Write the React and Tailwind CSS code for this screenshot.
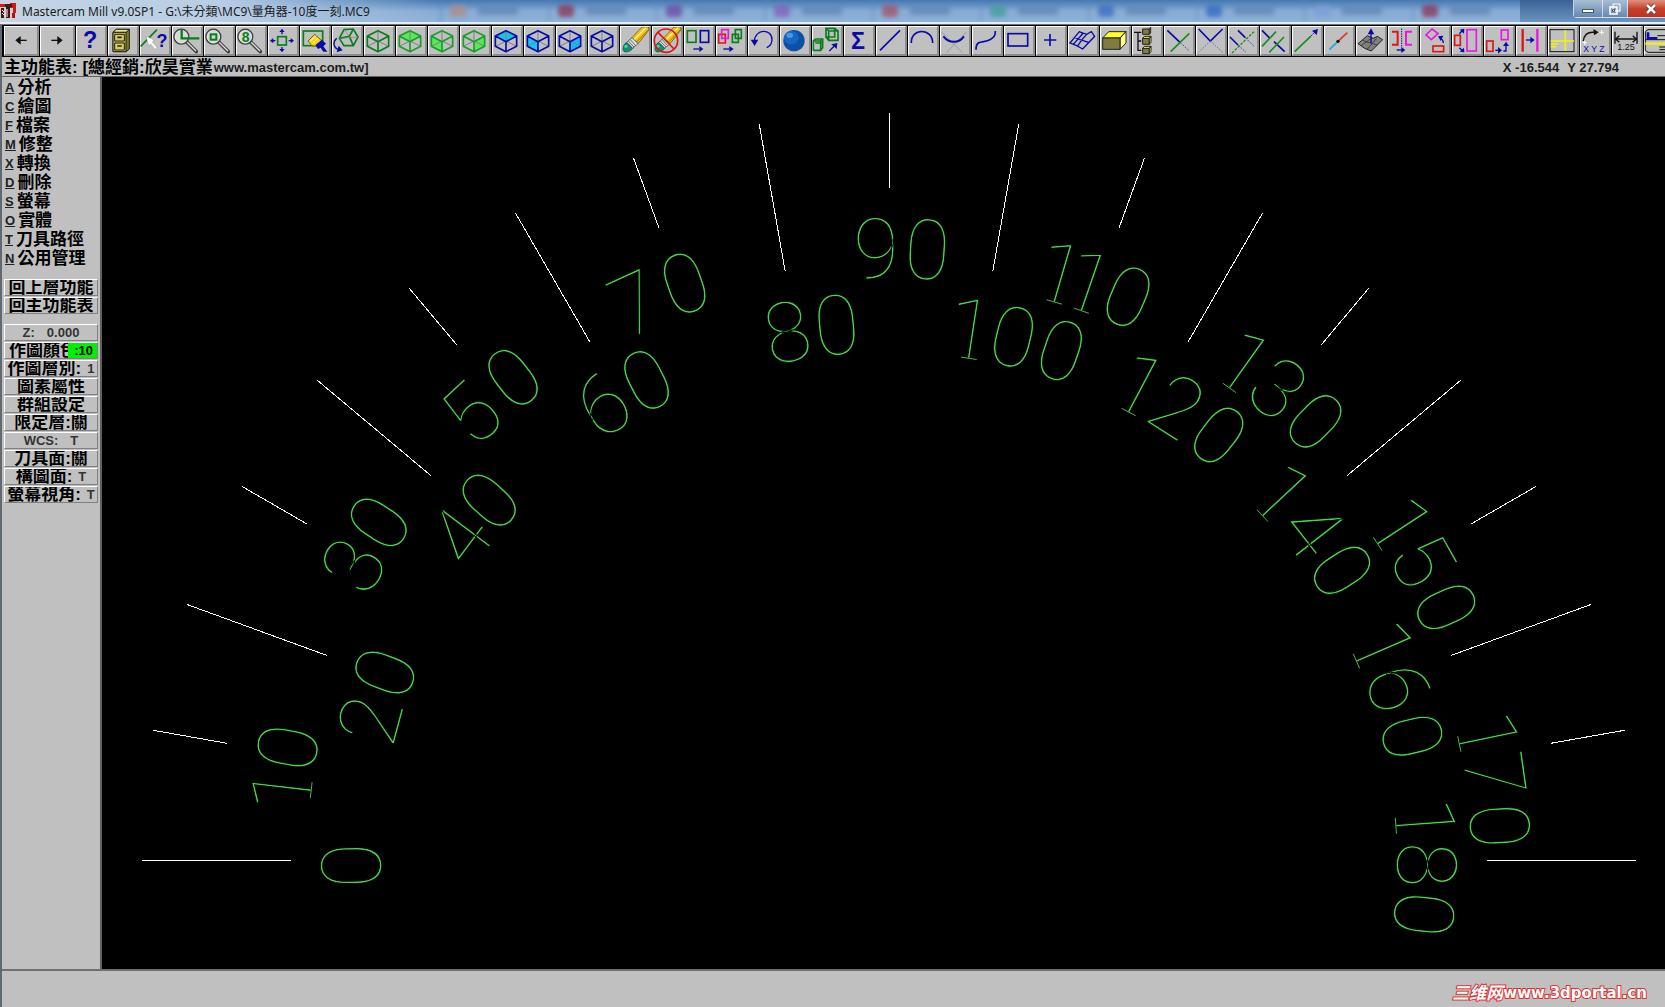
import clsx from 'clsx'

const NAVY = '#0a0aa8'
const GREEN = '#0a7d1e'
const RED = '#d81818'
const PINK = '#e818e0'

// ─── Toolbar artwork (90 x 84 grid per button face) ───────────────────────────

function Cube({ line, fill, face }) {
  const faces = {
    top: '42,11 74,27 42,44 10,27',
    left: '10,27 42,44 42,74 10,58',
    right: '74,27 42,44 42,74 74,58',
  }
  return (
    <g fill="none" strokeWidth="5" strokeLinejoin="round">
      {face && <polygon points={faces[face]} fill={fill} />}
      <path d="M42 11V42M10 58L42 42L74 58" stroke="#808080" strokeWidth="3" />
      <path d="M42 11L74 27V58L42 74L10 58V27ZM10 27L42 44L74 27M42 44V74" stroke={line} />
    </g>
  )
}

function Lens({ children }) {
  return (
    <>
      <path d="M43 44L73 74" stroke="#444" strokeWidth="11" strokeLinecap="round" />
      <path d="M44 44L72 72" stroke="#d8d8d8" strokeWidth="4" />
      <circle cx="28" cy="29" r="22" fill="#d4dcd4" stroke="#444" strokeWidth="5" />
      <circle cx="28" cy="29" r="19" fill="none" stroke="#f4f4f4" strokeWidth="2" />
      {children}
    </>
  )
}

function Pencil() {
  return (
    <>
      <path d="M36 32L66 0H86V10L54 50Z" fill="#f0c020" stroke="#604800" strokeWidth="2" />
      <path d="M42 38L78 2" stroke="#fff080" strokeWidth="4" />
      <path d="M50 45L86 8" stroke="#a07000" strokeWidth="3" />
      <path d="M36 32L54 50L38 64L20 46Z" fill="#e0e0e0" stroke="#333" strokeWidth="2" />
      <path d="M30 37L47 56M25 42L42 60" stroke="#666" strokeWidth="3" />
      <path d="M20 46L38 64C32 74 20 76 13 74C6 68 8 54 20 46Z" fill="#109070" stroke="#054838" strokeWidth="2" />
      <circle cx="18" cy="58" r="5" fill="#50d0a8" />
    </>
  )
}

function Arrow({ d, head, color = NAVY }) {
  return (
    <>
      <path d={d} fill="none" stroke={color} strokeWidth="4" />
      <polygon points={head} fill={color} />
    </>
  )
}

function Glyph({ x, y, size, color = NAVY, bold, children }) {
  return (
    <text x={x} y={y} fontSize={size} fill={color} fontWeight={bold ? 700 : 400} textAnchor="middle">
      {children}
    </text>
  )
}

const line = (d, stroke = NAVY, width = 5, dash) => (
  <path d={d} fill="none" stroke={stroke} strokeWidth={width} strokeDasharray={dash} />
)

const TOOLS = [
  { name: 'Help', art: <Glyph x="42" y="63" size="70" bold>?</Glyph> },
  {
    name: 'File',
    art: (
      <g stroke="#222" strokeWidth="3">
        <path d="M15 16L25 7H64V66L55 74H15Z" fill="#807820" />
        <path d="M15 16L25 7H64L54 16Z" fill="#f0ec90" />
        <path d="M15 16H54V74H15Z" fill="#c8bc48" />
        <path d="M20 22H49V42H20ZM20 48H49V69H20Z" fill="#d8cc60" />
        <path d="M28 31H41M28 57H41" strokeWidth="5" />
      </g>
    ),
  },
  {
    name: 'Analyze',
    art: (
      <>
        {line('M2 58L51 8', GREEN)}
        <path d="M18 27L42 39L37 45L52 62L45 67L32 51L26 57Z" fill="#fff" stroke="#777" strokeWidth="1" />
        <Glyph x="66" y="59" size="54" bold>?</Glyph>
      </>
    ),
  },
  { name: 'Zoom previous', art: <Lens><path d="M29 9V34H82M29 34H44" fill="none" stroke={GREEN} strokeWidth="7" /></Lens> },
  { name: 'Zoom window', art: <Lens><rect x="20" y="22" width="17" height="16" fill="none" stroke={GREEN} strokeWidth="6" /></Lens> },
  { name: 'Unzoom 0.8', art: <Lens><Glyph x="29" y="44" size="42" color={GREEN} bold>8</Glyph></Lens> },
  {
    name: 'Fit screen',
    art: (
      <>
        <rect x="29" y="29" width="26" height="25" fill="none" stroke={GREEN} strokeWidth="5" />
        <Arrow d="M42 14V22" head="34,15 42,5 50,15" />
        <Arrow d="M42 60V68" head="34,66 42,76 50,66" />
        <Arrow d="M14 41H22" head="16,33 6,41 16,49" />
        <Arrow d="M62 41H70" head="68,33 78,41 68,49" />
      </>
    ),
  },
  {
    name: 'Repaint',
    art: (
      <>
        <rect x="10" y="12" width="58" height="44" fill="none" stroke={GREEN} strokeWidth="5" />
        <path d="M24 42L44 22L64 40L50 58L36 56Z" fill="#f4d820" stroke="#806000" strokeWidth="3" />
        <path d="M32 42L46 28M40 48L53 34" stroke="#fff8a0" strokeWidth="3" />
        <path d="M46 54L66 38L78 50L70 58L82 74H70L62 62L54 66Z" fill={NAVY} />
      </>
    ),
  },
  {
    name: 'Dynamic rotation',
    art: (
      <>
        <path d="M22 34L36 8L64 6L78 30L64 56L36 56ZM22 34L52 28L64 6M52 28L64 56" fill="none" stroke={GREEN} strokeWidth="5" />
        <path d="M36 8L52 28M22 34L78 30" stroke="#808080" strokeWidth="2" />
        <Arrow d="M14 34C0 48 6 62 18 68" head="14,76 32,70 20,56" />
      </>
    ),
  },
  { name: 'Isometric view', art: <Cube line={GREEN} /> },
  { name: 'Top view', art: <Cube line="#1c9c2c" fill="#58e858" face="top" /> },
  { name: 'Front view', art: <Cube line="#1c9c2c" fill="#58e858" face="left" /> },
  { name: 'Side view', art: <Cube line="#1c9c2c" fill="#58e858" face="right" /> },
  { name: 'Top plane', art: <Cube line={NAVY} fill="#10c8e0" face="top" /> },
  { name: 'Front plane', art: <Cube line={NAVY} fill="#10c8f0" face="left" /> },
  { name: 'Side plane', art: <Cube line={NAVY} fill="#10b8f8" face="right" /> },
  { name: '3D plane', art: <Cube line={NAVY} /> },
  { name: 'Delete', art: <Pencil /> },
  {
    name: 'Undelete',
    art: (
      <>
        <Pencil />
        <circle cx="42" cy="41" r="35" fill="none" stroke={RED} strokeWidth="5" />
        {line('M18 16L66 66', RED)}
      </>
    ),
  },
  {
    name: 'Hide',
    art: (
      <>
        <rect x="10" y="11" width="26" height="35" fill="none" stroke={GREEN} strokeWidth="5" />
        <rect x="49" y="11" width="25" height="35" fill="none" stroke={NAVY} strokeWidth="5" />
        <Arrow d="M28 66H46" head="46,57 58,66 46,75" />
      </>
    ),
  },
  {
    name: 'Level move',
    art: (
      <>
        <g fill="none" strokeWidth="5">
          <path d="M8 22H28V48H8Z" stroke={RED} />
          <path d="M17 8H37V34H17Z" stroke={PINK} />
          <path d="M49 22H67V46H49ZM58 8H76V34H58Z" stroke={GREEN} />
        </g>
        <Arrow d="M22 66H40" head="40,57 53,66 40,75" />
      </>
    ),
  },
  { name: 'Undo', art: <Arrow d="M19 44C20 4 72 4 72 38C72 52 64 58 56 62" head="8,38 31,38 20,57" /> },
  {
    name: 'Shade',
    art: (
      <>
        <circle cx="42" cy="41" r="32" fill="#0c50a8" />
        <ellipse cx="34" cy="32" rx="22" ry="20" fill="#1468c4" />
        <ellipse cx="29" cy="25" rx="10" ry="8" fill="#4898e8" />
      </>
    ),
  },
  {
    name: 'Resize',
    art: (
      <>
        <g fill="none" stroke={GREEN} strokeWidth="5">
          <path d="M4 42H26V70H4ZM10 36H32V62L26 70M10 36L4 42M26 42L32 36M10 48H32" />
          <path d="M42 4H68V30H42ZM42 4L50 12H78V40H50V12M68 4L78 12M42 30L50 40" />
        </g>
        <Arrow d="M52 72L66 58" head="76,48 74,66 58,52" />
      </>
    ),
  },
  { name: 'Sum', art: <Glyph x="42" y="65" size="70" bold>Σ</Glyph> },
  { name: 'Line', art: line('M12 70L72 10') },
  { name: 'Arc', art: line('M10 48C8 2 74 2 74 48') },
  {
    name: 'Fillet',
    art: (
      <>
        {line('M4 14L66 76M80 14L20 76', '#888', 2)}
        <path d="M10 28C28 50 56 50 72 28" fill="none" stroke={NAVY} strokeWidth="6" />
      </>
    ),
  },
  { name: 'Spline', art: line('M12 68C12 34 38 50 54 38C68 30 70 24 70 12') },
  { name: 'Rectangle', art: <rect x="12" y="20" width="59" height="37" fill="none" stroke={NAVY} strokeWidth="5" /> },
  { name: 'Point', art: line('M24 39H61M42 21V57') },
  { name: 'Surface', art: line('M6 48L34 14L56 22L70 14L80 28L44 66L26 56ZM20 31L36 38L62 46M16 52L46 18M28 58L42 38L56 22M34 14L46 20', NAVY, 4) },
  {
    name: 'Solids',
    art: (
      <g stroke="#222" strokeWidth="3">
        <path d="M8 33L26 14H78L60 33Z" fill="#ffff20" />
        <path d="M60 33L78 14V48L60 67Z" fill="#ffff90" />
        <path d="M8 33H60V67H8Z" fill="#807c40" />
      </g>
    ),
  },
  {
    name: 'Solids manager',
    art: (
      <>
        {line('M6 16H28M18 16V70H28M18 42H28', '#111', 4)}
        <g stroke="#222" strokeWidth="3" fill="#807c40">
          <path d="M32 6H52V22H32ZM32 34H52V52H32ZM32 64H52V80H32Z" />
          <path d="M52 6L56 0V18L52 22ZM32 34L37 28H57L52 34ZM52 34L57 28V46L52 52ZM32 64L37 58H57L52 64ZM52 64L57 58V74L52 80Z" fill="#f4f070" />
        </g>
      </>
    ),
  },
  { name: 'Trim one', art: <>{line('M10 10L48 46')}{line('M48 46L76 72', '#4848b0', 3, '6 4')}{line('M20 74L76 19', '#1c8c1c')}</> },
  { name: 'Trim two', art: <>{line('M8 6L43 42L80 6')}{line('M43 42L8 76M43 42L80 76', '#7070b0', 3, '5 4')}</> },
  { name: 'Trim three', art: <>{line('M6 30L30 54M30 10L52 32')}{line('M30 54L54 76M52 32L78 58', '#4848b0', 3, '6 4')}{line('M12 78L78 14', '#1c8c1c', 4, '8 4')}</> },
  { name: 'Break', art: <>{line('M6 10L30 34M42 44L74 74')}{line('M6 58L48 14M28 76L72 30', '#1c8c1c')}</> },
  {
    name: 'Extend',
    art: (
      <>
        {line('M8 74L56 28', '#1c8c1c')}
        {line('M56 28L68 16', NAVY, 3, '5 3')}
        <polygon points="78,6 74,24 60,11" fill={NAVY} />
      </>
    ),
  },
  { name: 'Break two', art: <>{line('M16 68L42 43', '#20a8d0')}{line('M42 43L70 17', '#e03030')}<circle cx="42" cy="43" r="5" fill="#111" /></> },
  {
    name: 'Project',
    art: (
      <>
        <path d="M6 50L34 26L52 34L64 28L80 38L46 72L26 64Z" fill="#808080" stroke="#222" strokeWidth="3" />
        {line('M20 40L36 46L64 54M16 56L48 32M34 66L62 34', '#222', 2)}
        <Arrow d="M45 48V18" head="35,22 45,4 55,22" />
      </>
    ),
  },
  {
    name: 'Mirror',
    art: (
      <>
        {line('M12 14H29V53H12', RED, 6)}
        {line('M72 14H54V53H72', PINK, 6)}
        {line('M41 5V62', NAVY, 3, '4 3')}
        <Arrow d="M26 69H42" head="40,60 52,69 40,78" />
      </>
    ),
  },
  {
    name: 'Rotate',
    art: (
      <>
        <path d="M36 6L54 20L34 38L18 24Z" fill="none" stroke={PINK} strokeWidth="5" />
        <rect x="39" y="57" width="32" height="17" fill="none" stroke={RED} strokeWidth="5" />
        <Arrow d="M70 48C70 40 66 36 60 34" head="54,28 70,26 62,42" />
      </>
    ),
  },
  {
    name: 'Scale',
    art: (
      <>
        <rect x="8" y="25" width="17" height="30" fill="none" stroke={RED} strokeWidth="5" />
        <rect x="45" y="8" width="28" height="64" fill="none" stroke={PINK} strokeWidth="5" />
        <Arrow d="M22 20L30 12" head="37,5 36,20 23,8" />
        <Arrow d="M22 62L30 70" head="37,76 36,62 23,74" />
      </>
    ),
  },
  {
    name: 'Translate',
    art: (
      <>
        <rect x="8" y="42" width="19" height="31" fill="none" stroke={RED} strokeWidth="5" />
        <rect x="52" y="9" width="20" height="29" fill="none" stroke={PINK} strokeWidth="5" />
        <Arrow d="M34 70H44" head="42,60 54,70 42,80" />
        <Arrow d="M58 72H66V56" head="57,57 66,44 75,57" />
      </>
    ),
  },
  {
    name: 'Offset',
    art: (
      <>
        {line('M20 6V74', RED, 7)}
        {line('M64 6V74', PINK, 7)}
        <Arrow d="M30 39H44" head="43,29 56,39 43,49" />
      </>
    ),
  },
  {
    name: 'Viewports',
    art: (
      <>
        <rect x="6" y="8" width="72" height="66" fill="none" stroke="#111" strokeWidth="3" />
        {line('M8 42H78M52 10V72M8 51H30M8 59H24', '#f4f010')}
      </>
    ),
  },
  {
    name: 'WCS',
    art: (
      <>
        {line('M10 42C12 24 24 14 44 16', '#111', 4)}
        <polygon points="40,6 56,16 42,25" fill="#111" />
        {line('M8 47H20M14 41V54M58 16H72M65 9V23', '#fff', 3)}
        <Glyph x="42" y="74" size="26">X Y Z</Glyph>
      </>
    ),
  },
  {
    name: 'Dimension',
    art: (
      <>
        {line('M9 14V50M75 14V50M9 36H75', '#111', 4)}
        <path d="M22 26L11 36L22 46M62 26L73 36L62 46" fill="none" stroke="#111" strokeWidth="4" />
        <Glyph x="42" y="68" size="27" color="#111">1.25</Glyph>
      </>
    ),
  },
  {
    name: 'Job setup',
    art: (
      <>
        <path d="M4 14L12 8H90M4 14V70L12 76H90M4 38H90" fill="none" stroke="#111" strokeWidth="3" />
        {line('M4 50H90', '#f4f010', 7)}
        {line('M12 16V34H40', NAVY, 8)}
        {line('M40 26H90M46 60H90M46 68H90', '#111', 3)}
      </>
    ),
  },
]

function ToolButton({ name, wide, children }) {
  return (
    <button
      aria-label={name}
      className={clsx(
        'flex h-[30px] shrink-0 items-center justify-center border border-b-2 border-r-2 border-t-white border-l-white border-b-[#8c8c8c] border-r-[#8c8c8c] bg-[#c0c0c0]',
        wide ? 'w-[35px]' : 'w-[31px]'
      )}
    >
      {children}
    </button>
  )
}

function Toolbar() {
  return (
    <div className="flex gap-px overflow-hidden border-y border-black bg-black pl-0.5">
      <ToolButton name="Previous page" wide>
        <svg viewBox="0 0 90 84" className="h-7 w-[30px]"><Arrow d="M40 40H62" head="28,40 44,27 44,53" color="#111" /></svg>
      </ToolButton>
      <ToolButton name="Next page" wide>
        <svg viewBox="0 0 90 84" className="h-7 w-[30px]"><Arrow d="M28 40H50" head="62,40 46,27 46,53" color="#111" /></svg>
      </ToolButton>
      {TOOLS.map(tool => (
        <ToolButton key={tool.name} name={tool.name}>
          <svg viewBox="0 0 90 84" className="h-7 w-[30px] shrink-0">{tool.art}</svg>
        </ToolButton>
      ))}
    </div>
  )
}

// ─── Title bar ────────────────────────────────────────────────────────────────

const GLASS_TABS = [
  'bg-[#b08a80]', 'bg-[#8c2c48]', 'bg-[#6840a0]', 'bg-[#8058b8]', 'bg-[#a84860]',
  'bg-[#3c9c98]', 'bg-[#3468c0]', 'bg-[#2c62c0]', 'bg-[#7c9cd8]', 'bg-[#8c2c50]',
]

function TitleBar() {
  return (
    <header className="relative flex h-[22px] items-center overflow-hidden bg-gradient-to-b from-[#4478b0] via-[#86abd4] to-[#8fb2d8]">
      {/* Blurred windows behind the glass */}
      <div className="absolute inset-0 flex" aria-hidden="true">
        <div className="w-[440px] shrink-0 bg-gradient-to-r from-[#c4d4e4] via-[#b8cee4] to-[#b8cee4]/0" />
        {GLASS_TABS.map((color, i) => (
          <div key={i} className="flex w-[108px] shrink-0 items-center gap-3 border-l-2 border-[#5c88bc]/50 pl-2 blur-[2px]">
            <span className={clsx('h-3 w-4 rounded-sm opacity-70', color)} />
            <span className="h-2 w-10 bg-[#4c74a4]/50" />
          </div>
        ))}
        <div className="flex-1 bg-gradient-to-b from-[#3a6296] to-[#6c94c0]" />
      </div>
      <svg viewBox="0 0 16 16" className="relative mr-0.5 size-4 shrink-0">
        <rect width="16" height="16" fill="#d8d0d0" />
        <path d="M0 1H6V4H0ZM10 0H16V10H13V5H10Z" fill="#d01818" />
        <path d="M5 1H12V4H10V15H6V4H5ZM1 5H4V15H1Z" fill="#401818" />
        <path d="M12 10H15V15H12Z" fill="#b01010" />
        <path d="M7 6V14M2 7L4 9M2 10L4 12" stroke="#fff" />
      </svg>
      <h1 className="relative ml-1 flex-1 whitespace-nowrap pt-0.5 text-[12px] leading-5 text-[#1c1c1c]">
        Mastercam Mill v9.0SP1 - G:\未分類\MC9\量角器-10度一刻.MC9
      </h1>
      <div className="relative flex h-[18px] self-start rounded-bl border-b border-l border-white/70">
        <button aria-label="Minimize" className="flex w-7 items-center justify-center bg-gradient-to-b from-[#a8bed6] to-[#6688b0]">
          <span className="mt-1 h-1 w-3 border border-[#46586c] bg-white" />
        </button>
        <button aria-label="Restore" className="flex w-[26px] items-center justify-center border-x border-white/60 bg-gradient-to-b from-[#a8bed6] to-[#6688b0]">
          <svg viewBox="0 0 12 12" className="size-3 shrink-0" fill="none">
            <path d="M4 1H11V8H4Z" stroke="#46586c" strokeWidth="2" />
            <path d="M4 1H11V8H4ZM1 4H8V11H1Z" stroke="#fff" strokeWidth="1.5" />
            <path d="M3.5 6.500H5.500V8.500H3.500Z" stroke="#46586c" />
          </svg>
        </button>
        <button aria-label="Close" className="flex w-[37px] items-center justify-center bg-gradient-to-b from-[#dc9080] via-[#c84028] to-[#c03020] pl-2">
          <svg viewBox="0 0 12 12" className="size-3 shrink-0">
            <path d="M2 2L10 10M10 2L2 10" stroke="#5c2c2c" strokeWidth="4" />
            <path d="M2 2L10 10M10 2L2 10" stroke="#fff" strokeWidth="2.500" />
          </svg>
        </button>
      </div>
    </header>
  )
}

// ─── Sidebar ──────────────────────────────────────────────────────────────────

const MENU = [
  ['A', '分析'], ['C', '繪圖'], ['F', '檔案'], ['M', '修整'], ['X', '轉換'],
  ['D', '刪除'], ['S', '螢幕'], ['O', '實體'], ['T', '刀具路徑'], ['N', '公用管理'],
]

const SETTINGS = [
  { label: 'Z:', value: '0.000', latin: true },
  { label: '作圖顏色', value: ':10', swatch: true },
  { label: '作圖層別:', value: '1' },
  { label: '圖素屬性' },
  { label: '群組設定' },
  { label: '限定層:', value: '關', tight: true },
  { label: 'WCS:', value: 'T', latin: true },
  { label: '刀具面:', value: '關', tight: true },
  { label: '構圖面:', value: 'T' },
  { label: '螢幕視角:', value: 'T' },
]

function SideButton({ children }) {
  return (
    <button className="relative flex h-[17px] w-full items-center justify-center overflow-hidden whitespace-nowrap border border-t-white border-l-white border-b-[#808080] border-r-[#808080] text-[17px] leading-[15px]">
      {children}
    </button>
  )
}

function Sidebar() {
  return (
    <aside className="w-[100px] shrink-0 border-r-2 border-[#606060] pl-0.5 pr-0.5 font-bold text-black">
      <nav className="pt-px">
        {MENU.map(([key, label]) => (
          <button key={key} className="flex h-[19px] items-center gap-[3px] whitespace-nowrap pl-px text-[17px] leading-[19px]">
            <span className="text-[13px] text-[#222] underline">{key}</span>
            {label}
          </button>
        ))}
      </nav>
      <div className="mt-[11px] flex flex-col gap-px">
        <SideButton>回上層功能</SideButton>
        <SideButton>回主功能表</SideButton>
      </div>
      <div className="mt-2.5 flex flex-col gap-px">
        {SETTINGS.map(({ label, value, latin, swatch, tight }) => (
          <SideButton key={label}>
            <span className={clsx(latin && 'text-[13px] text-[#333]', swatch && 'mr-4')}>{label}</span>
            {swatch && (
              <span className="absolute inset-y-0 right-0 w-[29px] bg-[#00f000] pr-1 text-right text-[13px]">{value}</span>
            )}
            {value && !swatch && (
              <span className={clsx(!tight && 'text-[13px] text-[#333]', latin ? 'ml-3' : !tight && 'ml-1.5')}>{value}</span>
            )}
          </SideButton>
        ))}
      </div>
    </aside>
  )
}

// ─── Protractor drawing ───────────────────────────────────────────────────────

const CX = 889
const CY = 860
const OUTER = 747

// Degrees along the arc for each digit's centre
const LABELS = [
  ['0', [-0.6]],
  ['10', [6.6, 10.6]],
  ['20', [15.1, 20.4]],
  ['30', [28.8, 33.5]],
  ['40', [37, 42]],
  ['50', [46.9, 52.1]],
  ['60', [57.9, 63.2]],
  ['70', [65.5, 70.5]],
  ['80', [79.1, 84.4]],
  ['90', [88.8, 93.6]],
  ['100', [98.7, 103.4, 108.7]],
  ['110', [106.2, 109, 113]],
  ['120', [117.8, 122.4, 127.8]],
  ['130', [125.5, 129.5, 134.2]],
  ['140', [137, 142, 147.4]],
  ['150', [146.8, 150.7, 155.6]],
  ['160', [156.6, 161.3, 166.7]],
  ['170', [168.2, 172, 176.8]],
  ['180', [175.8, 180.5, 185.8]],
]

const DIGIT_SIZE = 84
const HALF_ADVANCE = 23
const HALF_HEIGHT = 30

// Point on the label's baseline, `along` px past the digit's centre
function baseline(deg, radius, along) {
  const turn = ((deg - 90) * Math.PI) / 180
  const base = radius - HALF_HEIGHT
  return {
    x: CX + base * Math.sin(turn) + along * Math.cos(turn),
    y: CY - base * Math.cos(turn) + along * Math.sin(turn),
  }
}

function ArcLabel({ text, degrees, radius }) {
  const spots = degrees.map(deg => baseline(deg, radius, -HALF_ADVANCE))
  return (
    <text
      x={spots.map(s => s.x).join(' ')}
      y={spots.map(s => s.y).join(' ')}
      rotate={degrees.map(deg => deg - 90).join(' ')}
    >
      {text}
    </text>
  )
}

// Short tick under each "1"
function FootTicks({ text, degrees, radius }) {
  return degrees.map((deg, i) => {
    if (text[i] !== '1') return null
    const from = baseline(deg, radius, -5)
    const to = baseline(deg, radius, 11)
    return <line key={i} x1={from.x} y1={from.y} x2={to.x} y2={to.y} />
  })
}

function Protractor() {
  return (
    <svg viewBox="102 77 1563 892" className="min-h-0 min-w-0 flex-1 bg-black" role="img" aria-label="Protractor, 10 degrees per mark">
      <g stroke="#fff" strokeWidth="1" shapeRendering="crispEdges">
        {LABELS.map(([text], i) => {
          const turn = (i * 10 * Math.PI) / 180
          const inner = i % 2 ? 672 : 598
          return (
            <line
              key={text}
              x1={CX - OUTER * Math.cos(turn)}
              y1={CY - OUTER * Math.sin(turn)}
              x2={CX - inner * Math.cos(turn)}
              y2={CY - inner * Math.sin(turn)}
            />
          )
        })}
      </g>
      {/* Black edge trims the strokes down to a hairline */}
      <g
        fill="#50d050"
        stroke="#000"
        strokeWidth="0.8"
        fontSize={DIGIT_SIZE}
        fontWeight="100"
        className="font-[Roboto,'Open_Sans',sans-serif]"
      >
        {LABELS.map(([text, degrees], i) => (
          <ArcLabel key={text} text={text} degrees={degrees} radius={i % 2 ? 612 : 538} />
        ))}
      </g>
      <g stroke="#48b848" strokeWidth="1">
        {LABELS.map(([text, degrees], i) => (
          <FootTicks key={text} text={text} degrees={degrees} radius={i % 2 ? 612 : 538} />
        ))}
      </g>
    </svg>
  )
}

// ─── App ──────────────────────────────────────────────────────────────────────

export default function App() {
  return (
    <div className="flex h-screen flex-col overflow-hidden bg-[#c0c0c0] font-['Liberation_Sans','Noto_Sans_CJK_TC',sans-serif]">
      <div className="font-['Noto_Sans','Noto_Sans_CJK_TC',sans-serif]">
        <TitleBar />
      </div>
      <div className="h-[3px] border-b border-[#707070] bg-[#e4ecf4]" />
      <div className="flex min-h-0 flex-1 flex-col border-l-2 border-[#606870]">
        <Toolbar />
        <div className="flex h-5 shrink-0 items-end justify-between whitespace-nowrap border-b border-[#606060] pl-0.5 pr-[46px] text-[13px] font-bold leading-4 text-[#1c1c1c]">
          <p className="flex items-center gap-px">
            <span className="text-[17px] leading-4 text-black">主功能表: [總經銷:欣昊實業</span>
            <span>www.mastercam.com.tw]</span>
          </p>
          <p className="flex gap-2">
            <span>X -16.544</span>
            <span>Y 27.794</span>
          </p>
        </div>
        <main className="flex min-h-0 flex-1">
          <Sidebar />
          <Protractor />
        </main>
        <footer className="flex h-[38px] shrink-0 items-center justify-end border-t-2 border-[#707070] pr-[18px] pt-2">
          <a
            href="#portal"
            className="flex items-center whitespace-nowrap font-['DejaVu_Sans','Noto_Sans_CJK_SC',sans-serif] text-[15px] font-bold leading-5 text-white [-webkit-text-stroke:2px_#e03030] [paint-order:stroke_fill]"
          >
            <span className="text-[17px] italic">三维网</span>
            <span>www.3dportal.cn</span>
          </a>
        </footer>
      </div>
    </div>
  )
}
